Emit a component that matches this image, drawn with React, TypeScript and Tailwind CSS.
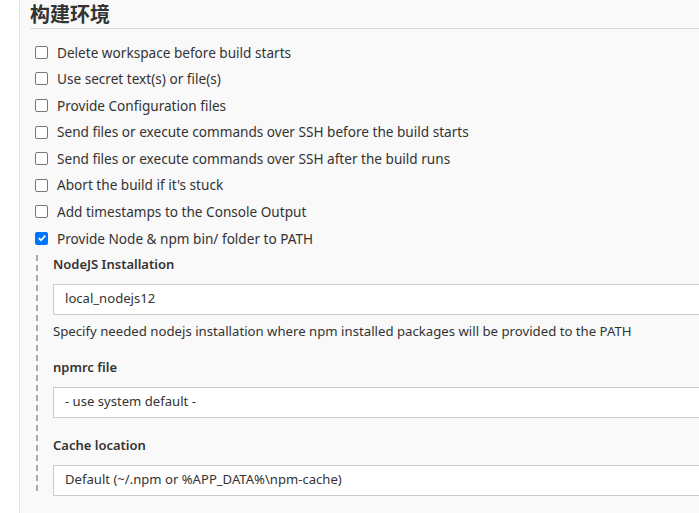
import React from "react";

const font = { fontFamily: '"Noto Sans", "Noto Sans CJK SC", sans-serif' };

function Check({ label, checked = false }: { label: string; checked?: boolean }) {
  return (
    <div className="flex items-center h-[26.6px]">
      <div className="w-[22px] shrink-0 flex justify-start">
        {checked ? (
          <div className="w-[13px] h-[13px] rounded-[2px] bg-[#0075ff] flex items-center justify-center">
            <svg width="10" height="10" viewBox="0 0 10 10">
              <path d="M1.8 5.2 L4 7.3 L8.3 2.6" stroke="white" strokeWidth="1.8" fill="none" />
            </svg>
          </div>
        ) : (
          <div className="w-[13px] h-[13px] rounded-[2px] border border-[#767676] bg-white" />
        )}
      </div>
      <span className="text-[13.6px] text-[#333] leading-none whitespace-nowrap">{label}</span>
    </div>
  );
}

function Field({ label, value }: { label: string; value: string }) {
  return (
    <div className="flex flex-col">
      <div className="text-[13px] font-semibold text-[#333] h-[19px] leading-[19px]">{label}</div>
      <div className="mt-[10px] h-[31px] border border-[#ccc] bg-white flex items-center pl-[11px] text-[13.1px] text-[#333] w-[660px] shrink-0 whitespace-nowrap">
        {value}
      </div>
    </div>
  );
}

export default function App() {
  return (
    <div className="w-[699px] h-[513px] overflow-hidden bg-white flex" style={font}>
      <div className="w-[20px] shrink-0 bg-white border-r border-[#e5e5e5]" />
      <div className="flex-1 min-w-0 bg-[#f9f9f9] pl-[10px] flex flex-col">
        <div className="h-[29px] shrink-0 border-b border-[#d9d9d9]">
          <div
            className="text-[20px] font-bold text-[#333] leading-[28px]"
            style={{ fontFamily: '"Noto Sans CJK SC", sans-serif' }}
          >
            构建环境
          </div>
        </div>
        <div className="pl-[5px] pt-[10px] flex flex-col">
          <Check label="Delete workspace before build starts" />
          <Check label="Use secret text(s) or file(s)" />
          <Check label="Provide Configuration files" />
          <Check label="Send files or execute commands over SSH before the build starts" />
          <Check label="Send files or execute commands over SSH after the build runs" />
          <Check label="Abort the build if it's stuck" />
          <Check label="Add timestamps to the Console Output" />
          <Check label="Provide Node & npm bin/ folder to PATH" checked />
        </div>
        <div className="ml-[6px] mt-[3px] border-l-2 border-dashed border-[#aaa] pl-[15px] h-[236px] flex flex-col">
          <Field label="NodeJS Installation" value="local_nodejs12" />
          <div className="text-[13.2px] text-[#333] mt-[7px] h-[19px] leading-[19px] whitespace-nowrap">
            Specify needed nodejs installation where npm installed packages will be provided to the PATH
          </div>
          <div className="mt-[17px]">
            <Field label="npmrc file" value="- use system default -" />
          </div>
          <div className="mt-[18px]">
            <Field label="Cache location" value="Default (~/.npm or %APP_DATA%\npm-cache)" />
          </div>
        </div>
      </div>
    </div>
  );
}
